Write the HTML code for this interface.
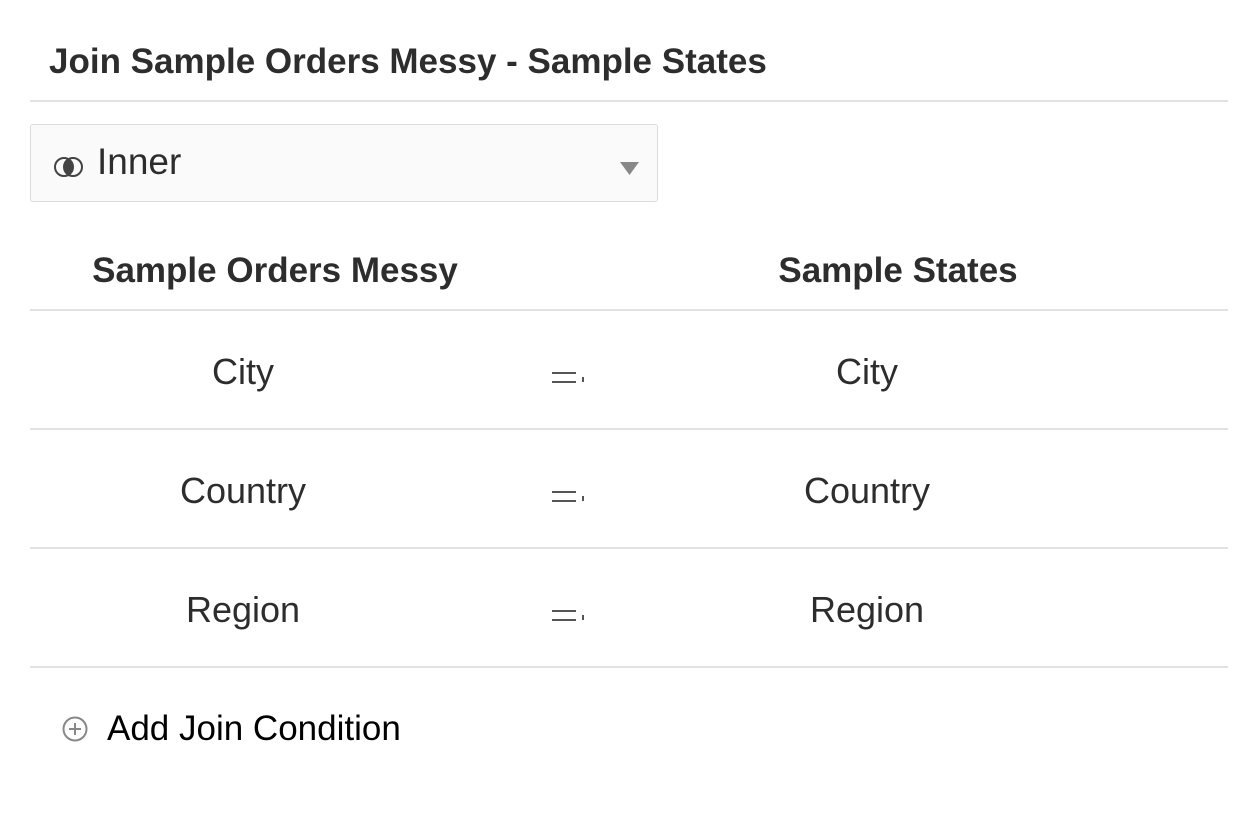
<!DOCTYPE html>
<html><head><style>
body{margin:0;width:1257px;height:816px;background:#fff;font-family:"Liberation Sans",sans-serif;color:#2d2d2d;position:relative;overflow:hidden}
.a{position:absolute;white-space:nowrap}
.hr{position:absolute;left:30px;width:1198px;height:2px;background:#e2e2e2}
.b{font-weight:bold}
.c{transform:translateX(-50%);font-size:36px}
.eq{position:absolute;left:552px;width:24px;height:2px;background:#555}
.dot{position:absolute;left:582px;width:2px;height:5px;background:#555}
</style></head><body>
<div class="a b" style="left:49px;top:42px;font-size:35px">Join Sample Orders Messy - Sample States</div>
<div class="hr" style="top:100px"></div>
<div class="a" style="left:30px;top:124px;width:626px;height:76px;border:1px solid #dcdcdc;border-radius:3px;background:#fafafa"></div>
<svg class="a" style="left:52px;top:155px" width="34" height="24" viewBox="0 0 34 24"><circle cx="12" cy="12" r="9" fill="none" stroke="#444" stroke-width="2"/><circle cx="21" cy="12" r="9" fill="none" stroke="#444" stroke-width="2"/><path d="M16.5 4.2 A9 9 0 0 1 16.5 19.8 A9 9 0 0 1 16.5 4.2Z" fill="#444"/></svg>
<div class="a" style="left:97px;top:141px;font-size:37px">Inner</div>
<svg class="a" style="left:620px;top:162px" width="20" height="14"><path d="M0 0H19L9.5 13Z" fill="#888"/></svg>
<div class="a b c" style="left:275px;top:251px;font-size:35px">Sample Orders Messy</div>
<div class="a b c" style="left:898px;top:251px;font-size:35px">Sample States</div>
<div class="hr" style="top:309px"></div>
<div class="a c" style="left:243px;top:351px">City</div>
<div class="a c" style="left:867px;top:351px">City</div>
<div class="eq" style="top:372px"></div><div class="eq" style="top:381px"></div><div class="dot" style="top:377px"></div>
<div class="hr" style="top:428px"></div>
<div class="a c" style="left:243px;top:470px">Country</div>
<div class="a c" style="left:867px;top:470px">Country</div>
<div class="eq" style="top:491px"></div><div class="eq" style="top:500px"></div><div class="dot" style="top:496px"></div>
<div class="hr" style="top:547px"></div>
<div class="a c" style="left:243px;top:589px">Region</div>
<div class="a c" style="left:867px;top:589px">Region</div>
<div class="eq" style="top:610px"></div><div class="eq" style="top:619px"></div><div class="dot" style="top:615px"></div>
<div class="hr" style="top:666px"></div>
<svg class="a" style="left:62px;top:716px" width="26" height="26" viewBox="0 0 26 26"><circle cx="13" cy="13" r="11.5" fill="none" stroke="#888" stroke-width="2"/><path d="M13 7V19M7 13H19" stroke="#888" stroke-width="2"/></svg>
<div class="a" style="left:107px;top:709px;font-size:35px;color:#000">Add Join Condition</div>
</body></html>
